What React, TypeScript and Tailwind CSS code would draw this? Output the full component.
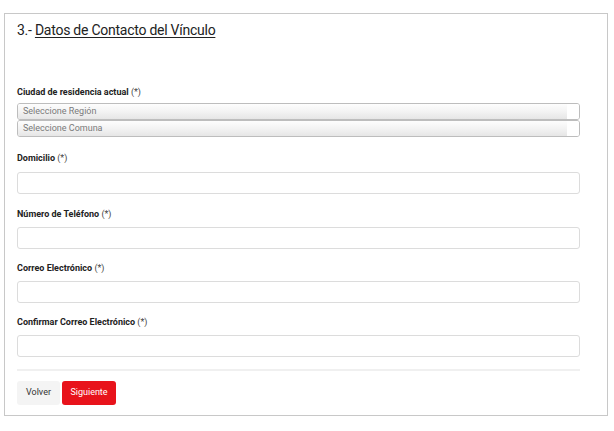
export default function App() {
  return (
    <div
      className="w-[614px] h-[431px] bg-white pt-[13px] pl-[4px]"
      style={{ fontFamily: "Roboto, 'Liberation Sans', sans-serif" }}
    >
      <div className="w-[604px] h-[403px] border border-[#c8c8c8] pl-[12px] pr-[27px] pt-[6px]">
        <h2 className="text-[14px] leading-[20px] tracking-[-0.25px] text-[#222]">
          3.- <span className="underline underline-offset-2">Datos de Contacto del Vínculo</span>
        </h2>

        <Label className="mt-[46px]" text="Ciudad de residencia actual" />
        <div className="mt-[5px] flex flex-col">
          <Select text="Seleccione Región" />
          <Select text="Seleccione Comuna" />
        </div>

        <Label className="mt-[15px]" text="Domicilio" />
        <Input className="mt-[8px]" />

        <Label className="mt-[14px]" text="Número de Teléfono" />
        <Input className="mt-[7px]" />

        <Label className="mt-[13px]" text="Correo Electrónico" />
        <Input className="mt-[7px]" />

        <Label className="mt-[13px]" text="Confirmar Correo Electrónico" />
        <Input className="mt-[7px]" />

        <div className="mt-[12px] h-[2px] bg-[#f0f0f0]" />

        <div className="mt-[10px] flex gap-[2px]">
          <button className="w-[43px] h-[24px] rounded-[3px] bg-[#f4f4f4] text-[9px] text-[#333]">
            Volver
          </button>
          <button className="w-[54px] h-[24px] rounded-[3px] bg-[#e8131b] text-[9px] text-white">
            Siguiente
          </button>
        </div>
      </div>
    </div>
  );
}

function Label({ text, className }: { text: string; className?: string }) {
  return (
    <div className={"text-[9px] leading-[12px] text-[#222] " + (className ?? "")}>
      <span className="font-bold">{text}</span> <span className="text-[#444]">(*)</span>
    </div>
  );
}

function Select({ text }: { text: string }) {
  return (
    <div className="h-[17px] flex rounded-[3px] border border-[#bdbdbd] overflow-hidden bg-white">
      <div className="flex-1 flex items-center pl-[5px] bg-gradient-to-b from-[#fdfdfd] via-[#f3f3f3] to-[#e6e6e6] text-[9px] text-[#7a7a7a]">
        {text}
      </div>
      <div className="w-[12px] bg-white" />
    </div>
  );
}

function Input({ className }: { className?: string }) {
  return (
    <div className={"h-[22px] rounded-[3px] border border-[#dcdcdc] bg-white " + (className ?? "")} />
  );
}
